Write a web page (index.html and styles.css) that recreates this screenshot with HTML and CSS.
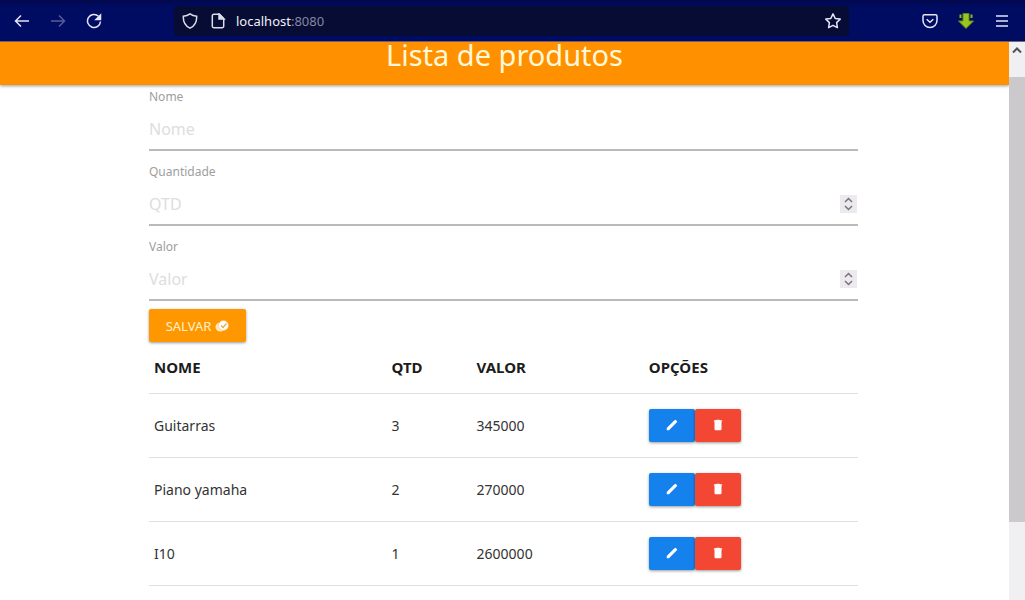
FILE: index.html
```html
<!DOCTYPE html>
<html lang="pt-BR">
<head>
<meta charset="utf-8">
<meta name="viewport" content="width=device-width, initial-scale=1">
<title>Lista de produtos</title>
<link rel="stylesheet" href="styles.css">
</head>
<body>
<svg class="defs" aria-hidden="true">
  <symbol id="pencil" viewBox="0 0 24 24"><path fill="currentColor" d="M3 17.2V21h3.800L17.800 9.900l-3.800-3.800zM20.700 7a1 1 0 0 0 0-1.400l-2.300-2.300a1 1 0 0 0-1.400 0l-3 2.800 3.800 3.800z"/></symbol>
  <symbol id="trash" viewBox="0 0 24 24"><path fill="currentColor" d="M6 19a2 2 0 0 0 2 2h8a2 2 0 0 0 2-2V6H6zM19 4h-3.500l-1-1h-5l-1 1H5v2h14z"/></symbol>
</svg>
<header class="toolbar">
  <nav class="nav" aria-label="Navegação">
    <button class="tool" aria-label="Voltar"><svg viewBox="0 0 16 16"><path d="M15 8H1.500M7 2.500 1.500 8 7 13.500"/></svg></button>
    <button class="tool dim" aria-label="Avançar"><svg viewBox="0 0 16 16"><path d="M1 8h13.500M9 2.500 14.500 8 9 13.500"/></svg></button>
    <button class="tool" aria-label="Recarregar"><svg viewBox="0 0 16 16"><path d="M14.500 8.500a6.500 6.500 0 1 1-2-5.200"/><path class="solid" d="M14.500 2v4.500H10z"/></svg></button>
  </nav>
  <div class="address">
    <svg class="glyph" viewBox="0 0 16 16"><path d="M8 .8c2 1.500 4.200 2.200 6.700 2.400C14.900 9 12.500 13 8 15.200 3.500 13 1.100 9 1.300 3.200 3.800 3 6 2.300 8 .8z"/></svg>
    <svg class="glyph page-glyph" viewBox="0 0 16 16"><path d="M9.500 1.200H4A1.700 1.700 0 0 0 2.300 3v10A1.700 1.700 0 0 0 4 14.800h8a1.700 1.700 0 0 0 1.700-1.800V5.500z"/><path class="solid" d="M9 1l5 5H9z"/></svg>
    <span class="url">localhost<span class="port">:8080</span></span>
    <button class="tool star" aria-label="Favoritar"><svg viewBox="0 0 16 16"><path stroke-linejoin="round" d="M8 .9l2.200 4.500 5 .7-3.600 3.500.8 5L8 12.300l-4.400 2.300.8-5L.8 6.100l5-.7z"/></svg></button>
  </div>
  <div class="extras">
    <button class="tool" aria-label="Pocket"><svg viewBox="0 0 16 16"><path d="M2.500 1.800h11a1.500 1.500 0 0 1 1.500 1.500V7.500a7 7 0 0 1-14 0V3.300a1.500 1.500 0 0 1 1.500-1.500z"/><path stroke-width="2" d="M4.700 6.200 8 9.300l3.300-3.100"/></svg></button>
    <button class="tool download" aria-label="Baixar"><svg viewBox="0 0 16 16"><path d="M5 .5h6V8h4.500L8 15.500.5 8H5z"/><path class="spark" d="M2.500 1.500v3.500M13.500 1.500v3.500"/></svg></button>
    <button class="tool" aria-label="Menu"><svg viewBox="0 0 16 16"><path d="M2 3h12M2 8h12M2 13h12"/></svg></button>
  </div>
</header>
<div class="viewport">
  <main class="page">
    <div class="banner"><h1 class="title">Lista de produtos</h1></div>
    <div class="container">
      <form>
        <div class="field">
          <label class="label" for="nome">Nome</label>
          <div class="line"><input class="input" id="nome" type="text" placeholder="Nome"></div>
        </div>
        <div class="field">
          <label class="label" for="qtd">Quantidade</label>
          <div class="line"><input class="input" id="qtd" type="number" placeholder="QTD"><span class="spin" aria-hidden="true"><svg viewBox="0 0 17 18"><path d="M5 7l3.500-3.500L12 7M5 11l3.500 3.500L12 11"/></svg></span></div>
        </div>
        <div class="field">
          <label class="label" for="valor">Valor</label>
          <div class="line"><input class="input" id="valor" type="number" placeholder="Valor"><span class="spin" aria-hidden="true"><svg viewBox="0 0 17 18"><path d="M5 7l3.500-3.500L12 7M5 11l3.500 3.500L12 11"/></svg></span></div>
        </div>
        <button class="btn save" type="button">SALVAR
          <svg class="save-icon" viewBox="0 0 14 12"><ellipse cx="5.500" cy="7" rx="5" ry="4.500" fill="#ffe9bd"/><circle cx="8.500" cy="5.500" r="5" fill="#fff" stroke="#ffb74d" stroke-width=".6"/><path d="M6 5.500l2 2 3.500-4" fill="none" stroke="#e8a84c" stroke-width="1.200"/></svg>
        </button>
      </form>
      <table class="table">
        <thead>
          <tr><th class="c-name">NOME</th><th class="c-qty">QTD</th><th class="c-value">VALOR</th><th>OPÇÕES</th></tr>
        </thead>
        <tbody>
          <tr><td>Guitarras</td><td>3</td><td>345000</td><td><div class="actions"><button class="btn edit" aria-label="Editar Guitarras"><svg><use href="#pencil"/></svg></button><button class="btn delete" aria-label="Excluir Guitarras"><svg><use href="#trash"/></svg></button></div></td></tr>
          <tr><td>Piano yamaha</td><td>2</td><td>270000</td><td><div class="actions"><button class="btn edit" aria-label="Editar Piano yamaha"><svg><use href="#pencil"/></svg></button><button class="btn delete" aria-label="Excluir Piano yamaha"><svg><use href="#trash"/></svg></button></div></td></tr>
          <tr><td>I10</td><td>1</td><td>2600000</td><td><div class="actions"><button class="btn edit" aria-label="Editar I10"><svg><use href="#pencil"/></svg></button><button class="btn delete" aria-label="Excluir I10"><svg><use href="#trash"/></svg></button></div></td></tr>
        </tbody>
      </table>
    </div>
  </main>
  <div class="scrollbar" aria-hidden="true">
    <svg class="scroll-arrow" viewBox="0 0 16 16"><path d="M4 10l4-4 4 4"/></svg>
    <div class="track"><div class="thumb"></div></div>
  </div>
</div>
</body>
</html>
```
FILE: styles.css
```css
* { box-sizing: border-box; }

body {
  margin: 0;
  height: 100vh;
  display: flex;
  flex-direction: column;
  overflow: hidden;
  background: #fff;
  color: #333;
  font-family: "Noto Sans", "Open Sans", sans-serif;
  font-size: 14px;
}

button { font: inherit; border: 0; cursor: pointer; }

.defs { display: none; }

/* Browser toolbar */
.toolbar {
  flex: none;
  height: 42px;
  display: flex;
  align-items: center;
  background: linear-gradient(#03084a 0, #000b62 6px, #000b62 100%);
  border-bottom: 1px solid #77667a;
}

.nav { display: flex; gap: 20px; width: 174px; padding-left: 14px; }

.tool {
  display: flex;
  padding: 0;
  background: none;
  color: #e4e5f5;
}

.tool svg { width: 16px; height: 16px; }

.tool path, .glyph path {
  fill: none;
  stroke: currentColor;
  stroke-width: 1.5;
}

.tool .solid, .glyph .solid { fill: currentColor; }

.dim { color: #555c9c; }

.address {
  flex: 1;
  height: 30px;
  display: flex;
  align-items: center;
  padding: 0 8px;
  border-radius: 3px;
  background: #060c33;
  color: #dcddea;
}

.glyph { width: 16px; height: 16px; }
.page-glyph { margin-left: 12px; }
.url { flex: 1; margin-left: 10px; font-size: 13px; color: #f0f0f8; }
.port { color: #8486a4; }

.extras { display: flex; gap: 20px; width: 176px; padding: 0 15px 0 73px; }
.download path { fill: #9bc51c; stroke: #5e8a1a; stroke-width: 1; }
.download .spark { stroke: #8fb52a; stroke-width: 2; }

/* Page */
.viewport { flex: 1; min-height: 0; display: flex; }
.page { flex: 1; min-width: 0; }

.banner {
  height: 43px;
  background: #ff9100;
  box-shadow: 0 1px 3px rgba(0, 0, 0, 0.4);
}

.title {
  margin: 0;
  color: #fff8d8;
  font-size: 29px;
  font-weight: 400;
  line-height: 26px;
  text-align: center;
}

.container { padding: 4px 151px 0 149px; }

.field { margin-bottom: 13px; }

.label {
  display: block;
  color: #9e9e9e;
  font-size: 12px;
  line-height: 16px;
}

.line {
  height: 46px;
  display: flex;
  align-items: center;
  padding: 4px 1px 0 0;
  border-bottom: 2px solid #bcb8bc;
}

.input {
  flex: 1;
  min-width: 0;
  padding: 0;
  border: 0;
  outline: 0;
  background: none;
  color: #333;
  font: inherit;
  font-size: 16px;
  appearance: textfield;
}

.input::placeholder { color: #e0dce0; }
.input::-webkit-inner-spin-button { display: none; }

.spin { width: 17px; height: 18px; background: #eceaee; }
.spin svg { display: block; }
.spin path { fill: none; stroke: #77757c; stroke-width: 1.5; }

.btn {
  display: flex;
  align-items: center;
  justify-content: center;
  height: 33px;
  padding: 0;
  border-radius: 2px;
  color: #fff;
  box-shadow: 0 1px 3px rgba(0, 0, 0, 0.4);
}

.save {
  gap: 4px;
  width: 97px;
  margin-top: -5px;
  background: #ff9800;
  color: #fff0c8;
  font-size: 13px;
}

.save-icon { width: 14px; height: 12px; }

.table {
  width: 100%;
  table-layout: fixed;
  border-collapse: collapse;
  text-align: left;
}

.table th, .table td { padding: 0 5px; border-bottom: 1px solid #e2dfe2; }
.table th { height: 51px; color: #1c1c1c; font-size: 15px; font-weight: 700; }
.table td { height: 64px; }

.c-name { width: 33.5%; }
.c-qty { width: 12%; }
.c-value { width: 24.3%; }

.actions { display: flex; }
.actions .btn { width: 46px; }
.actions svg { width: 14px; height: 14px; }
.edit { background: #1581ec; }
.delete { background: #f44733; }

/* Scrollbar */
.scrollbar {
  flex: none;
  width: 16px;
  display: flex;
  flex-direction: column;
  background: #f0eff1;
}

.scroll-arrow { width: 16px; height: 35px; padding-bottom: 18px; }
.scroll-arrow path { fill: none; stroke: #505054; stroke-width: 2; }
.track { flex: 1; }
.thumb { height: 85%; background: #cbc9cc; }
```
